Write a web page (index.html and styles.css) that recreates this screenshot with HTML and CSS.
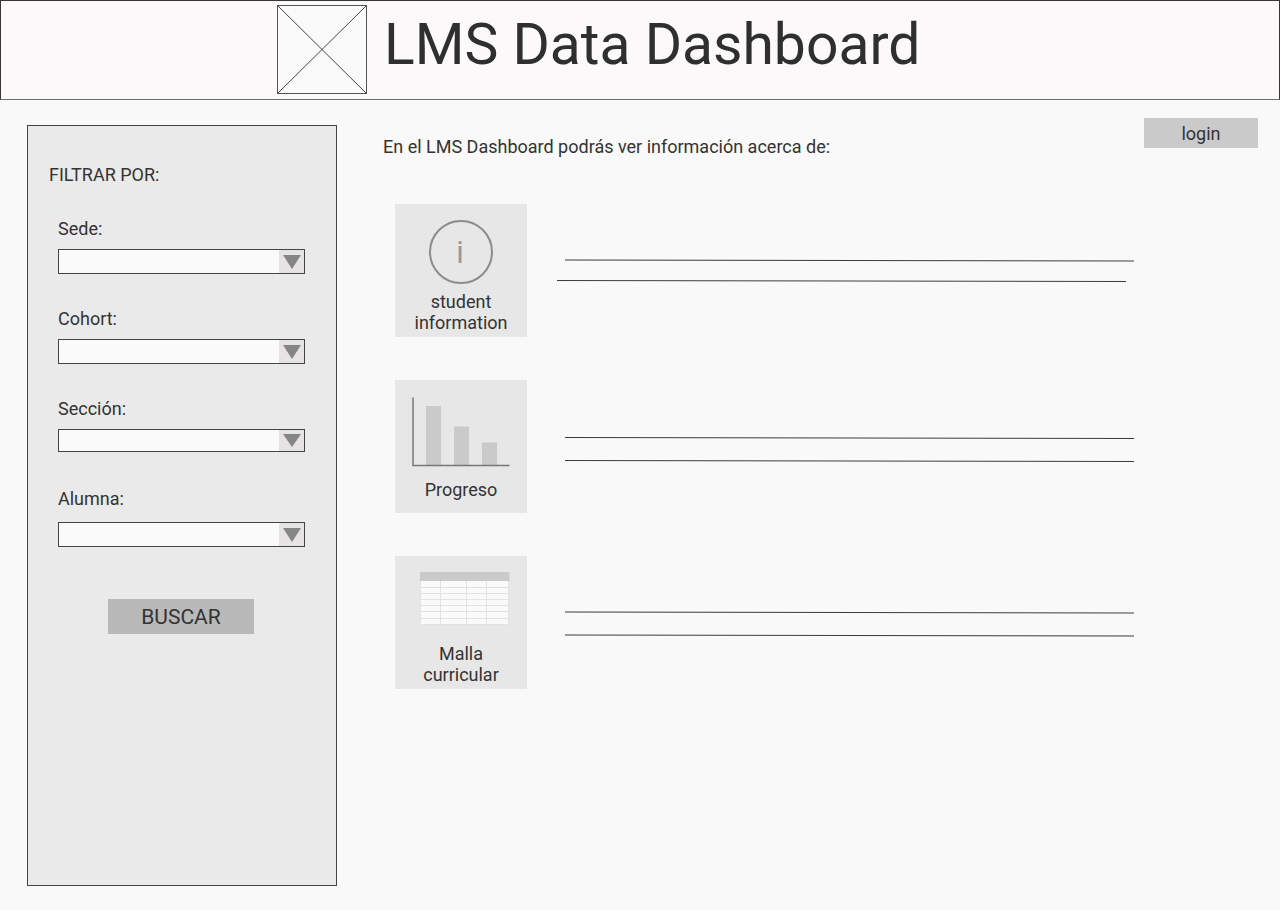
FILE: index.html
```html
<!DOCTYPE html>
<html lang="es">
<head>
<meta charset="utf-8">
<meta name="viewport" content="width=device-width, initial-scale=1">
<title>LMS Data Dashboard</title>
<link rel="stylesheet" href="styles.css">
</head>
<body>
<header class="header">
  <svg class="logo" viewBox="0 0 90 89" aria-hidden="true">
    <rect class="logo-box" x="0.5" y="0.5" width="89" height="88"/>
    <path class="logo-cross" d="M0.5 0.5L89.5 88.5M89.5 0.5L0.5 88.5"/>
  </svg>
  <h1 class="title">LMS Data Dashboard</h1>
</header>
<div class="layout">
  <form class="sidebar">
    <h2 class="sidebar-title">FILTRAR POR:</h2>
    <div class="fields">
      <div class="field">
        <label class="label" for="sede">Sede:</label>
        <div class="picker">
          <select class="select" id="sede"><option></option></select>
          <svg class="arrow" viewBox="0 0 18 14" aria-hidden="true"><path d="M0 0H18L9 14Z"/></svg>
        </div>
      </div>
      <div class="field">
        <label class="label" for="cohort">Cohort:</label>
        <div class="picker">
          <select class="select" id="cohort"><option></option></select>
          <svg class="arrow" viewBox="0 0 18 14" aria-hidden="true"><path d="M0 0H18L9 14Z"/></svg>
        </div>
      </div>
      <div class="field">
        <label class="label" for="seccion">Sección:</label>
        <div class="picker picker-slim">
          <select class="select" id="seccion"><option></option></select>
          <svg class="arrow" viewBox="0 0 18 14" preserveAspectRatio="none" aria-hidden="true"><path d="M0 0H18L9 14Z"/></svg>
        </div>
      </div>
      <div class="field field-spaced">
        <label class="label" for="alumna">Alumna:</label>
        <div class="picker">
          <select class="select" id="alumna"><option></option></select>
          <svg class="arrow" viewBox="0 0 18 14" aria-hidden="true"><path d="M0 0H18L9 14Z"/></svg>
        </div>
      </div>
    </div>
    <button class="search" type="button">BUSCAR</button>
  </form>
  <main class="content">
    <div class="topbar">
      <p class="intro">En el LMS Dashboard podrás ver información acerca de:</p>
      <button class="login" type="button">login</button>
    </div>
    <div class="topics">
      <section class="topic">
        <a class="card" href="#informacion">
          <svg class="icon" viewBox="0 0 132 87" aria-hidden="true">
            <circle class="info-ring" cx="66" cy="48" r="31"/>
            <text class="info-letter" x="65" y="59">i</text>
          </svg>
          <span class="caption">student information</span>
        </a>
        <svg class="lines" viewBox="0 0 577 133" preserveAspectRatio="none" aria-hidden="true">
          <path d="M8 56L577 57M0 76.500L569 77.500"/>
        </svg>
      </section>
      <section class="topic">
        <a class="card" href="#progreso">
          <svg class="icon icon-chart" viewBox="0 0 132 99" aria-hidden="true">
            <path class="bars" d="M31 26H46V85H31ZM59 46.500H74V85H59ZM87 62.500H102V85H87Z"/>
            <path class="axes" d="M18 17.500V85.500H114.500"/>
          </svg>
          <span class="caption">Progreso</span>
        </a>
        <svg class="lines" viewBox="0 0 577 133" preserveAspectRatio="none" aria-hidden="true">
          <path d="M8 57.500L577 58.500M8 80.500L577 81.500"/>
        </svg>
      </section>
      <section class="topic">
        <a class="card" href="#malla">
          <svg class="icon" viewBox="0 0 132 87" aria-hidden="true">
            <rect class="grid-body" x="25" y="25" width="89" height="43"/>
            <path class="grid-lines" d="M25 31.500H114M25 37.500H114M25 43.500H114M25 49.500H114M25 55.500H114M25 62.500H114M25 68.500H114M25.500 25V69M45.500 25V69M71.500 25V69M91.500 25V69M113.500 25V69"/>
            <rect class="grid-head" x="25" y="16" width="89.500" height="9"/>
          </svg>
          <span class="caption">Malla curricular</span>
        </a>
        <svg class="lines" viewBox="0 0 577 133" preserveAspectRatio="none" aria-hidden="true">
          <path d="M8 56L577 57M8 79L577 80"/>
        </svg>
      </section>
    </div>
  </main>
</div>
</body>
</html>
```
FILE: styles.css
```css
* {
  box-sizing: border-box;
}

body {
  margin: 0;
  min-height: 100vh;
  display: flex;
  flex-direction: column;
  background: #f9f9f9;
  color: #333;
  font: 18px/21px Roboto, sans-serif;
}

.header {
  display: flex;
  gap: 17px;
  padding: 4px 20px 5px 276px;
  border: 1px solid #383638;
  border-bottom-color: #6e6c6d;
  background: #fbf9fa;
}

.logo {
  flex: none;
  width: 90px;
  height: 89px;
}

.logo-box {
  fill: #fafafa;
  stroke: #555;
}

.logo-cross {
  stroke: #444;
}

.title {
  margin: 0;
  color: #2f2f2f;
  font-size: 57px;
  font-weight: 400;
  line-height: 80px;
}

.layout {
  flex: 1;
  display: flex;
  gap: 46px;
  padding: 0 22px 0 27px;
}

.sidebar {
  flex: none;
  display: flex;
  flex-direction: column;
  width: 310px;
  margin: 25px 0 24px;
  padding: 38px 23px 38px 21px;
  border: 1px solid #444;
  background: #eaeaea;
}

.sidebar-title {
  margin: 0 0 33px;
  font: inherit;
}

.fields {
  display: grid;
  gap: 34px;
  padding: 0 8px 0 9px;
}

.field {
  display: flex;
  flex-direction: column;
  gap: 10px;
  min-height: 56px;
}

.field-spaced {
  gap: 13px;
}

.picker {
  display: grid;
  grid-template-columns: 1fr 26px;
  align-items: center;
  height: 25px;
}

.picker-slim {
  height: 23px;
}

.select {
  grid-area: 1 / 1 / 2 / 3;
  width: 100%;
  height: 100%;
  border: 1px solid #444;
  border-radius: 0;
  appearance: none;
  background: linear-gradient(#e5e3e4, #e5e3e4) right / 25px 100% no-repeat #fafafa;
  font: inherit;
}

.arrow {
  grid-area: 1 / 2;
  justify-self: center;
  width: 18px;
  height: 14px;
  fill: #858585;
  pointer-events: none;
  z-index: 1;
}

.picker-slim .arrow {
  height: 13px;
}

.search {
  align-self: center;
  width: 146px;
  height: 35px;
  margin-top: 52px;
  padding: 0;
  border: 0;
  background: #b9b9b9;
  color: inherit;
  font: 21px Roboto, sans-serif;
}

.content {
  flex: 1;
  min-width: 0;
}

.topbar {
  display: flex;
  justify-content: space-between;
  align-items: flex-start;
  gap: 20px;
  padding-top: 18px;
}

.intro {
  margin: 18px 0 0;
}

.login {
  flex: none;
  width: 114px;
  height: 30px;
  padding: 0;
  border: 0;
  background: #cacaca;
  color: inherit;
  font: inherit;
}

.topics {
  display: grid;
  gap: 43px;
  padding: 47px 124px 20px 12px;
}

.topic {
  display: flex;
  gap: 30px;
}

.card {
  flex: none;
  display: flex;
  flex-direction: column;
  align-items: center;
  width: 132px;
  height: 133px;
  background: #e7e7e7;
  color: inherit;
  text-align: center;
  text-decoration: none;
}

.icon {
  flex: none;
  width: 132px;
  height: 87px;
  fill: none;
}

.icon-chart {
  height: 99px;
}

.caption {
  padding: 0 14px;
}

.info-ring {
  stroke: #8c8c8c;
  stroke-width: 2;
}

.info-letter {
  fill: #999;
  font-size: 31px;
  text-anchor: middle;
}

.bars {
  fill: #cacaca;
}

.axes {
  stroke: #777;
  stroke-width: 1.5;
}

.grid-body {
  fill: #fafafa;
}

.grid-head {
  fill: #cacaca;
}

.grid-lines {
  stroke: #e2e2e2;
}

.lines {
  flex: 1;
  min-width: 0;
  height: 133px;
  fill: none;
  stroke: #3c3c3c;
}
```
